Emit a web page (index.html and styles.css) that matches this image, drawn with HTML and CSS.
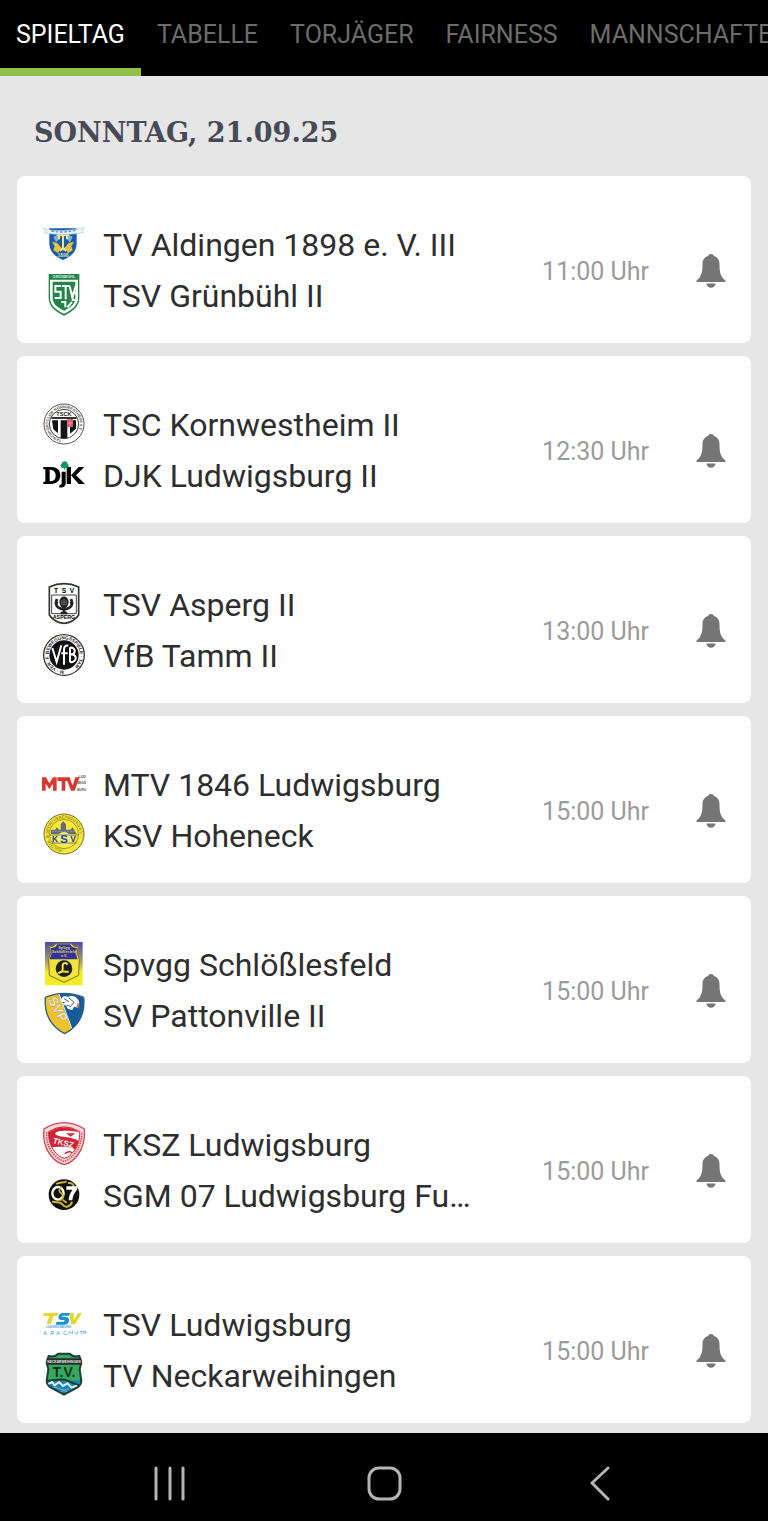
FILE: index.html
```html
<!DOCTYPE html>
<html lang="de">
<head>
    <meta charset="UTF-8">
    <meta name="viewport" content="width=device-width, initial-scale=1">
    <title>Spieltag</title>
    <link rel="stylesheet" href="styles.css">
</head>
<body>
    <svg class="defs" width="0" height="0" aria-hidden="true">
        <symbol id="bell" viewBox="0 0 88 104">
            <path d="M44 0c5 0 8 3 9 6 12 4 17 13 17 26 0 24 3 38 18 48v6H0v-6c15-10 18-24 18-48C18 19 23 10 35 6c1-3 4-6 9-6z"/>
            <path d="M30 90h28c-2 9-7 13-14 13s-12-4-14-13z"/>
        </symbol>
        <path id="ring" d="M66 110a47 47 0 1 1 1 0"/>
    </svg>

    <nav class="tabs">
        <a class="tab active" href="#spieltag">SPIELTAG</a>
        <a class="tab" href="#tabelle">TABELLE</a>
        <a class="tab" href="#torjaeger">TORJÄGER</a>
        <a class="tab" href="#fairness">FAIRNESS</a>
        <a class="tab" href="#mannschaften">MANNSCHAFTEN</a>
    </nav>

    <main class="content">
        <h1 class="date">SONNTAG, 21.09.25</h1>
        <ul class="matches">
            <li class="match">
                <div class="teams">
                    <div class="team">
                        <svg class="logo" viewBox="0 0 132 132">
                            <path d="M22 16h82v44c0 26-16 40-41 51-25-11-41-25-41-51z" fill="#1d5ba8"/>
                            <path d="M30 56l16 4 12 14-10 16-14-8 4-12zM96 56l-16 4-12 14 10 16 14-8-4-12z" fill="#e2c63a"/>
                            <path d="M34 42l10-6 8 12-10 10zM92 42l-10-6-8 12 10 10z" fill="#7db3e6"/>
                            <path d="M45 37h36M51 37v12M75 37v12M63 37v45M54 84l9-10 9 10" fill="none" stroke="#f0e488" stroke-width="6"/>
                            <path d="M2 15c24 12 96 9 125-2l-6 10 4 5c-32 8-92 8-118 1l5-6z" fill="#eef5fc" stroke="#a9c8e2" stroke-width="2"/>
                            <path d="M28 24q35 7 72-2" fill="none" stroke="#5993c9" stroke-width="4" stroke-dasharray="8 5"/>
                            <text class="mark" x="63" y="102" font-size="15" fill="#d5dfb0">1898</text>
                        </svg>
                        <span class="name">TV Aldingen 1898 e. V. III</span>
                    </div>
                    <div class="team">
                        <svg class="logo" viewBox="0 0 132 132">
                            <path d="M20 0h92v72c0 24-18 40-46 53-28-13-46-29-46-53z" fill="#238349"/>
                            <path d="M24 17h84v54c0 21-16 36-42 48-26-12-42-27-42-48z" fill="#fff"/>
                            <path d="M32 23h68v48c0 17-12 28-34 39-22-11-34-22-34-39z" fill="#238349"/>
                            <text class="mark" x="66" y="13" font-size="12" fill="#d6eddc">GRÜNBÜHL</text>
                            <path d="M57 36H40v17h16v19H38M60 36h23M71 36v40M83 36l8 36 10-36M108 58H92v20h16M58 84h12v16M76 100l14-16" fill="none" stroke="#fff" stroke-width="6"/>
                        </svg>
                        <span class="name">TSV Grünbühl II</span>
                    </div>
                </div>
                <time class="time">11:00 Uhr</time>
                <button class="alarm" aria-label="Erinnerung"><svg class="bell"><use href="#bell"/></svg></button>
            </li>
            <li class="match">
                <div class="teams">
                    <div class="team">
                        <svg class="logo" viewBox="0 0 132 132">
                            <circle cx="66" cy="63" r="60" fill="#fff" stroke="#555" stroke-width="3"/>
                            <text class="ringtext" font-size="12" fill="#555"><textPath href="#ring">· TANZSPORTCLUB KORNWESTHEIM e.V. ·</textPath></text>
                            <circle cx="66" cy="63" r="44" fill="#fff" stroke="#444" stroke-width="3"/>
                            <path d="M28 42h76v6H28z" fill="#333"/>
                            <path d="M30 52h18v39L34 79zM56 52h20v54H56zM84 52h18v25L84 92z" fill="#151515"/>
                            <path d="M76 48h17v24H76z" fill="#d65861"/>
                            <path d="M84 48v24M76 60h17" stroke="#f3b2b8" stroke-width="2"/>
                            <text class="mark" x="66" y="39" font-size="17" fill="#222">TSCK</text>
                        </svg>
                        <span class="name">TSC Kornwestheim II</span>
                    </div>
                    <div class="team">
                        <svg class="logo" viewBox="0 0 132 132">
                            <path fill-rule="evenodd" d="M4 39h23c18 0 28 9 28 25S45 90 27 90H4v-7h6V46H4zm19 8v35c12 0 18-6 18-17s-6-18-18-18z"/>
                            <path d="M59 53h12v35c0 10-8 14-20 12l2-8c5 0 6-2 6-6zM74 39h13v51H74zM87 64l23-25h17l-25 25 27 26h-19z"/>
                            <path d="M68 22a9 9 0 0 1 9 7 8 8 0 0 1-3 14l-4-1-2 8-2-8-4 1a8 8 0 0 1-3-14 9 9 0 0 1 9-7z" fill="#179760"/>
                        </svg>
                        <span class="name">DJK Ludwigsburg II</span>
                    </div>
                </div>
                <time class="time">12:30 Uhr</time>
                <button class="alarm" aria-label="Erinnerung"><svg class="bell"><use href="#bell"/></svg></button>
            </li>
            <li class="match">
                <div class="teams">
                    <div class="team">
                        <svg class="logo" viewBox="0 0 132 132">
                            <path d="M22 12Q66-8 110 12v84q-16 23-44 25-28-2-44-25z" fill="#fff" stroke="#333" stroke-width="5"/>
                            <path d="M29 36h74v56H29z" fill="none" stroke="#444" stroke-width="3"/>
                            <text class="mark" x="42" y="30" font-size="20">T</text>
                            <text class="mark" x="66" y="30" font-size="20">S</text>
                            <text class="mark" x="90" y="30" font-size="20">V</text>
                            <path d="M66 40c13 4 16 14 12 25-3 7-7 10-12 11-5-1-9-4-12-11-4-11-1-21 12-25z" fill="#222"/>
                            <path d="M45 48c-7 18-1 27 20 31M87 48c7 18 1 27-20 31M66 70v22M56 90h20M38 58l10 3M94 58l-10 3" fill="none" stroke="#222" stroke-width="8"/>
                            <path d="M60 52v14M66 48v19M72 52v14" stroke="#aaa" stroke-width="2"/>
                            <text class="mark" x="66" y="109" font-size="16">ASPERG</text>
                        </svg>
                        <span class="name">TSV Asperg II</span>
                    </div>
                    <div class="team">
                        <svg class="logo" viewBox="0 0 132 132">
                            <circle cx="66" cy="63" r="61" fill="#fff" stroke="#333" stroke-width="4"/>
                            <text class="ringtext" font-size="14" fill="#222"><textPath href="#ring">M · VER. F. BEWEGUNGSSPIELE · TAM</textPath></text>
                            <circle cx="66" cy="63" r="44" fill="#111"/>
                            <path d="M31 42l13 42 14-50M66 92V48q0-16 13-13M58 58h19M84 40v45M84 41c19-2 19 20 0 20 23-2 23 24 0 24" fill="none" stroke="#fff" stroke-width="6"/>
                        </svg>
                        <span class="name">VfB Tamm II</span>
                    </div>
                </div>
                <time class="time">13:00 Uhr</time>
                <button class="alarm" aria-label="Erinnerung"><svg class="bell"><use href="#bell"/></svg></button>
            </li>
            <li class="match">
                <div class="teams">
                    <div class="team">
                        <svg class="logo" viewBox="0 0 132 132">
                            <path d="M0 83V43h12l10 18 11-18h11v40H33V62L22 78 11 62v21zM46 43h37l9 25 8-25h13L98 83H87L76 54h-6v29H59V54H46z" fill="#d93832"/>
                            <text class="tiny" x="132" y="46" font-size="11" fill="#555">LUD</text>
                            <text class="tiny" x="132" y="64" font-size="10" fill="#555">WIGS</text>
                            <text class="tiny" x="132" y="83" font-size="9" fill="#555">BURG</text>
                        </svg>
                        <span class="name">MTV 1846 Ludwigsburg</span>
                    </div>
                    <div class="team">
                        <svg class="logo" viewBox="0 0 132 132">
                            <circle cx="66" cy="60" r="60" fill="#f5e637" stroke="#77702d" stroke-width="3"/>
                            <g transform="translate(0 -3)">
                                <text class="ringtext light" font-size="12" fill="#585528"><textPath href="#ring">· KULTUR- &amp; SPORTVEREINIGUNG e.V. ·</textPath></text>
                            </g>
                            <circle cx="66" cy="60" r="44" fill="#f8ea35" stroke="#756f35" stroke-width="2"/>
                            <path d="M27 60V47h12l6-7 6 7h5V31l8-9 8 9v16h13l7-7 12 20z" fill="#626c7b"/>
                            <path d="M31 52h68" stroke="#a0a7a8" stroke-width="3" stroke-dasharray="4 5"/>
                            <circle cx="66" cy="75" r="21" fill="#f7ee75"/>
                            <path d="M24 63h84M28 87h76" stroke="#3550a3" stroke-width="2"/>
                            <text class="mark" x="39" y="84" font-size="25" fill="#263f9b">K</text>
                            <text class="mark" x="66" y="88" font-size="34" fill="#263f9b">S</text>
                            <text class="mark" x="93" y="84" font-size="25" fill="#263f9b">V</text>
                        </svg>
                        <span class="name">KSV Hoheneck</span>
                    </div>
                </div>
                <time class="time">15:00 Uhr</time>
                <button class="alarm" aria-label="Erinnerung"><svg class="bell"><use href="#bell"/></svg></button>
            </li>
            <li class="match">
                <div class="teams">
                    <div class="team">
                        <svg class="logo" viewBox="0 0 132 132">
                            <defs>
                                <linearGradient id="dusk" x2="0" y2="1">
                                    <stop offset="0" stop-color="#514ba4"/>
                                    <stop offset=".45" stop-color="#a5a16d"/>
                                    <stop offset=".7" stop-color="#f5ed21"/>
                                </linearGradient>
                            </defs>
                            <path d="M9-3h113v130H9z" fill="url(#dusk)"/>
                            <path d="M21 9q14 5 20-7h48q6 12 20 7l-4 20 7 20-2 48-44 21-44-21-2-48 7-20z" fill="#f1e438" stroke="#797047" stroke-width="3"/>
                            <path d="M26 14q16 2 19-10h40q4 12 20 10l-4 17 6 18H23l6-18z" fill="#343398"/>
                            <text class="mark" x="66" y="17" font-size="11" fill="#ddd663">SpVgg</text>
                            <text class="mark" x="66" y="30" font-size="11" fill="#ddd663">Schlößlesfeld</text>
                            <text class="mark" x="66" y="43" font-size="11" fill="#ddd663">e.V.</text>
                            <circle cx="66" cy="77" r="25" fill="#20201a"/>
                            <path d="M77 65c-6-9-16-5-15 5 1 12-1 20-11 19 8-8 14-1 29-3" fill="none" stroke="#f1e438" stroke-width="6"/>
                        </svg>
                        <span class="name">Spvgg Schlößlesfeld</span>
                    </div>
                    <div class="team">
                        <svg class="logo" viewBox="0 0 132 132">
                            <defs>
                                <clipPath id="svpShield"><path d="M10 10Q67-14 125 10c5 52-13 86-57 109C24 96 6 62 10 10z"/></clipPath>
                            </defs>
                            <g clip-path="url(#svpShield)">
                                <path d="M0-10h132v140H0z" fill="#155c99"/>
                                <path d="M0-5h48l45 122-19 17L0 120z" fill="#edc32d"/>
                                <path d="M50-3l44 119" stroke="#fff" stroke-width="3"/>
                                <path d="M58 14c8-14 18-2 24-7 15-5 27 5 30 19l-4 15-12-3-5 10-13-3-6-10-11-5 9-5-15-3z" fill="#fff"/>
                                <path d="M66 14l15 9M80 11l17 15M87 34l10-8M73 33l14 5" stroke="#40648d" stroke-width="3"/>
                                <path d="M108 23l-6 20 11-4z" fill="#b78561"/>
                            </g>
                            <path d="M10 10Q67-14 125 10c5 52-13 86-57 109C24 96 6 62 10 10z" fill="none" stroke="#315f7d" stroke-width="4"/>
                            <g transform="translate(17 17) rotate(62)">
                                <text class="sport" font-size="40" font-weight="700" fill="#fff" stroke="#8b7430" stroke-width="1">SVP</text>
                            </g>
                        </svg>
                        <span class="name">SV Pattonville II</span>
                    </div>
                </div>
                <time class="time">15:00 Uhr</time>
                <button class="alarm" aria-label="Erinnerung"><svg class="bell"><use href="#bell"/></svg></button>
            </li>
            <li class="match">
                <div class="teams">
                    <div class="team">
                        <svg class="logo" viewBox="0 0 132 132">
                            <path d="M6 18Q66-20 127 18c3 31-4 57-20 78-12 16-24 26-40 29-17-3-30-13-42-29C9 75 2 49 6 18z" fill="#f6d5d8" stroke="#cc4a56" stroke-width="4"/>
                            <path d="M14 28v14c1 18 7 34 18 48 10 13 21 21 34 25 13-4 24-12 34-25 11-14 17-30 19-48V28" fill="none" stroke="#cc4a56" stroke-width="5" stroke-dasharray="4 3"/>
                            <path d="M20 26Q66-3 113 26c1 24-5 43-17 58-9 12-17 19-29 22-13-3-21-10-30-22C25 69 19 50 20 26z" fill="#fff" stroke="#cf2537" stroke-width="3"/>
                            <path d="M20 28Q66-3 113 28c-21-6-74-8-73 4 2 12 52 6 71 23L99 80c-15-11-49-9-69-7-8-13-10-28-10-45z" fill="#cf2537"/>
                            <path d="M78 33h16l-8 6zM68 92q14-10 22-3" fill="none" stroke="#cf2537" stroke-width="4"/>
                            <text class="mark" x="64" y="67" font-size="24" fill="#fff" transform="rotate(14 62 60)">TKSZ</text>
                        </svg>
                        <span class="name">TKSZ Ludwigsburg</span>
                    </div>
                    <div class="team">
                        <svg class="logo" viewBox="0 0 132 132">
                            <circle cx="66" cy="62" r="46" fill="#11110d"/>
                            <path d="M42 30c14-8 20-2 32-8M78 27c14-2 19 8 16 14M30 82c13 6 24-1 31 9 8 13 26 7 29-8M62 78l12 8" fill="none" stroke="#c9b62e" stroke-width="6"/>
                            <ellipse cx="48" cy="58" rx="17" ry="19" fill="none" stroke="#fff" stroke-width="7"/>
                            <path d="M73 37h33v9c-9 11-14 20-15 33H80c0-14 5-23 12-32H73z" fill="#fff"/>
                            <path d="M59 38c-10 8-9 14-1 20 9 7 8 14-3 22" fill="none" stroke="#c9b62e" stroke-width="5"/>
                        </svg>
                        <span class="name">SGM 07 Ludwigsburg Fu…</span>
                    </div>
                </div>
                <time class="time">15:00 Uhr</time>
                <button class="alarm" aria-label="Erinnerung"><svg class="bell"><use href="#bell"/></svg></button>
            </li>
            <li class="match">
                <div class="teams">
                    <div class="team">
                        <svg class="logo" viewBox="0 0 132 132">
                            <path d="M6 30h43l-3 9H34l-8 25H14l8-25H3zM82 30h13l1 21 12-21h12L99 64H87z" fill="#e4d82c"/>
                            <path d="M84 30H61c-13 0-16 18-5 21h12l-2 5H44l-3 9h27c15 0 18-21 5-23H61l1-4h19z" fill="#1e92cf"/>
                            <text class="mark" x="50" y="76" font-size="10" fill="#4da9d4">LUDWIGSBURG</text>
                            <text class="sport" x="4" y="95" font-size="16" fill="#3297c9">A</text>
                            <text class="sport" x="25" y="95" font-size="16" fill="#3297c9">R</text>
                            <text class="sport" x="43" y="95" font-size="16" fill="#3297c9">A</text>
                            <text class="sport" x="63" y="95" font-size="16" fill="#3297c9">C</text>
                            <path d="M78 94l6-9 4 6M91 83v10M97 87l7 6M109 84l-5 9M114 85h14M118 85v8M126 85v8M131 83v10" fill="none" stroke="#3297c9" stroke-width="2"/>
                        </svg>
                        <span class="name">TSV Ludwigsburg</span>
                    </div>
                    <div class="team">
                        <svg class="logo" viewBox="0 0 132 132">
                            <defs>
                                <clipPath id="tvShield"><path d="M20 6q19 5 29-7h34q10 12 29 7l6 20-5 20 5 35c0 21-22 22-52 41-30-19-52-20-52-41l5-35-5-20z"/></clipPath>
                            </defs>
                            <g clip-path="url(#tvShield)">
                                <path d="M10-5h110v130H10z" fill="#36a95d"/>
                                <path d="M12 84c45-12 68 2 110-8v60H10z" fill="#1c82b4"/>
                                <path d="M12 82c30-6 43-7 57-5l49 20" fill="none" stroke="#183f2e" stroke-width="6"/>
                                <path d="M16 91l14-7 8 10 13-10 12 12 13-8 13 13 13-5 14 12" fill="none" stroke="#e0f0f2" stroke-width="6"/>
                                <path d="M25 104q14-9 28 0t28 0M48 114q18-8 33 0" fill="none" stroke="#66b9d2" stroke-width="3"/>
                            </g>
                            <path d="M20 6q19 5 29-7h34q10 12 29 7l6 20-5 20 5 35c0 21-22 22-52 41-30-19-52-20-52-41l5-35-5-20z" fill="none" stroke="#263b34" stroke-width="6"/>
                            <path d="M14 13h104v19H14z" fill="#25302c"/>
                            <text class="mark" x="66" y="26" font-size="10" fill="#e5eae6">NECKARWEIHINGEN</text>
                            <text class="mark" x="66" y="70" font-size="42" fill="#152d24">T.V.</text>
                        </svg>
                        <span class="name">TV Neckarweihingen</span>
                    </div>
                </div>
                <time class="time">15:00 Uhr</time>
                <button class="alarm" aria-label="Erinnerung"><svg class="bell"><use href="#bell"/></svg></button>
            </li>
        </ul>
    </main>

    <footer class="sysbar">
        <button class="key" aria-label="Letzte Apps">
            <svg width="36" height="36" viewBox="0 0 36 36"><path d="M5 3v31M19 3v31M32 3v31"/></svg>
        </button>
        <button class="key" aria-label="Start">
            <svg width="36" height="36" viewBox="0 0 36 36"><rect x="3" y="3" width="31" height="31" rx="10"/></svg>
        </button>
        <button class="key" aria-label="Zurück">
            <svg width="36" height="36" viewBox="0 0 36 36"><path d="M27 3L11 18l16 16"/></svg>
        </button>
    </footer>
</body>
</html>
```

FILE: styles.css
```css
* {
    margin: 0;
    padding: 0;
    box-sizing: border-box;
}
body{
    display: flex;
    flex-direction: column;
    min-height: 100vh;
    background: #e6e6e6;
    font-family: Roboto, "Liberation Sans", sans-serif;
}
button{border:0;background:none;cursor:pointer;}
.defs{position:absolute;}

/* tabs */
.tabs{display:flex;height:76px;overflow:hidden;background:#000;}
.tab{
    flex: none;
    padding: 0 16px;
    border-bottom: 8px solid transparent;
    line-height: 70px;
    font-size: 25px;
    color: #6c6c6c;
    text-decoration: none;
}
.tab.active{color:#fff;border-color:#94bf4b;}

/* matches */
.content{flex:1;padding:0 17px 10px;}
.date{
    height: 100px;
    padding: 6px 17px 0;
    line-height: 102px;
    font-family: "DejaVu Serif", serif;
    font-size: 27px;
    color: #484b57;
}
.matches{display:flex;flex-direction:column;gap:13px;list-style:none;}
.match{
    display: flex;
    align-items: center;
    padding: 43px 18px 22px 25px;
    border-radius: 8px;
    background: #fff;
}
.teams{flex:1;min-width:0;}
.team{display:flex;align-items:center;gap:17px;height:51px;}
.logo{flex:none;width:44px;height:44px;overflow:visible;}
.name{
    overflow: hidden;
    text-overflow: ellipsis;
    white-space: nowrap;
    line-height: 50px;
    font-size: 32px;
    color: #2e2e2e;
}
.time{flex:none;padding-top:2px;font-size:25px;color:#9b9b9b;}
.alarm{flex:none;margin-left:40px;padding:9px 7px 7px;line-height:0;}
.bell{width:30px;height:34px;fill:#757575;}

/* lettering in the club logos */
.mark{font-family:"Liberation Sans", sans-serif;font-weight:700;text-anchor:middle;}
.ringtext{font-family:"Liberation Sans", sans-serif;font-weight:700;}
.ringtext.light{font-weight:400;}
.tiny{font-family:"Liberation Sans", sans-serif;font-weight:700;text-anchor:end;}
.sport{font-family:"Liberation Sans", sans-serif;}

/* system bar */
.sysbar{display:flex;justify-content:center;height:88px;padding-top:14px;background:#000;}
.key{width:28%;}
.key svg{fill:none;stroke:#b5b5b5;stroke-width:3;stroke-linecap:round;stroke-linejoin:round;}
```
